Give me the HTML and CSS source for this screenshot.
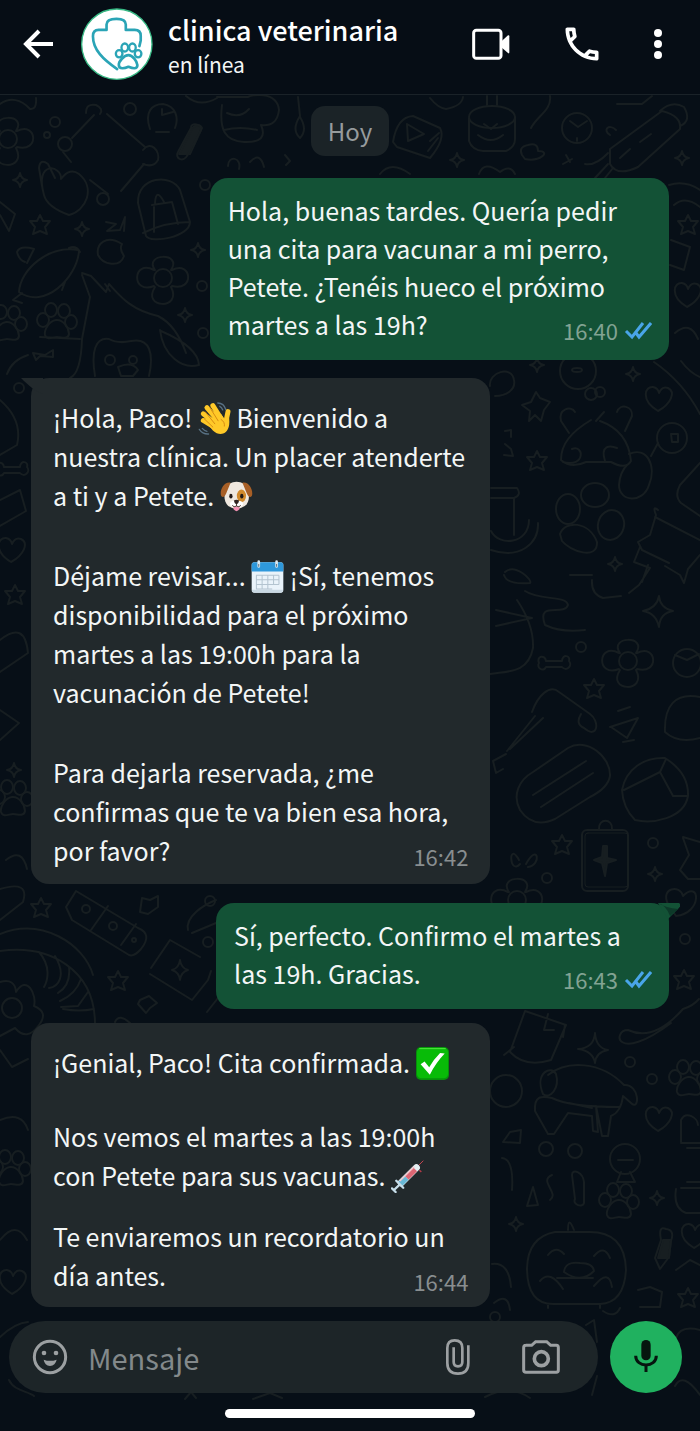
FILE: index.html
```html
<!DOCTYPE html>
<html lang="es">
<head>
<meta charset="utf-8">
<meta name="viewport" content="width=device-width, initial-scale=1">
<title>clinica veterinaria</title>
<link rel="stylesheet" href="styles.css">
</head>
<body>
<div class="screen">
  <svg class="wallpaper" viewBox="0 0 700 1431" preserveAspectRatio="xMidYMin slice" aria-hidden="true">
    <defs>
      <g id="paw"><ellipse cx="-13" cy="-3" rx="6" ry="7"/><ellipse cx="-5" cy="-13" rx="6" ry="7"/><ellipse cx="8" cy="-12" rx="6" ry="7"/><ellipse cx="15" cy="-1" rx="6" ry="7"/><path d="M0-3C-7-2-12 7-11 12C-9 18-3 14 1 14C6 14 12 17 13 11C13 5 7-4 0-3Z"/></g>
      <path id="star" d="M0-10L3-4L10-4L5 2L7 9L0 6L-7 9L-5 2L-10-4L-3-4Z"/>
      <path id="spark" d="M0-7Q1-1 7 0Q1 1 0 7Q-1 1-7 0Q-1-1 0-7Z"/>
      <path id="heart" d="M0 12C-18 1-13-13-5-12Q0-11 1-6Q4-13 10-11C18-7 13 5 0 12Z"/>
      <path id="bone" d="M-8-3H8C8-10 17-9 15-3C19 2 12 8 8 3H-8C-11 9-18 3-15-1C-18-8-9-10-8-3Z"/>
      <g id="flower"><circle r="9"/><path d="M-8-8C-20-25 20-26 8-8M9-8C29-18 32 14 9 8M8 9C20 32-22 31-8 9M-9 8C-32 17-31-19-9-8"/></g>
      <circle id="dot" r="5"/>
    </defs>
    <g class="doodle">
      <path d="M0 104C10 97 21 99 30 109Q37 110 36 98"/>
      <use href="#flower" x="8" y="139"/>
      <circle cx="55" cy="122" r="5"/><circle cx="47" cy="135" r="3"/>
      <path d="M94 115L72 138M107 114L145 147M144 164L121 191M63 152L71 162M90 180L108 194"/>
      <path d="M86 113Q86 103 96 105Q104 109 100 114"/><circle cx="65" cy="144" r="7"/><path d="M143 150C151 140 160 151 158 160C154 167 148 166 143 164"/>
      <circle cx="103" cy="199" r="6"/><circle cx="130" cy="109" r="6"/>
      <path d="M150 129C144 112 152 104 163 104C176 106 179 118 175 128M156 132H169M162 109V115L173 112"/>
      <path class="fill" d="M192 128Q199 122 202 128L190 154H179Z"/><path d="M191 128C190 122 203 124 201 130L189 152C184 165 174 158 178 152Z"/>
      <use href="#spark" x="20" y="180"/><path d="M44 195C34 160 62 165 61 179Q70 167 79 174C96 188 86 211 69 215Q47 207 44 195M42 186L39 168Q40 158 48 164L55 178"/>
      <path d="M146 236L138 203C137 176 172 173 180 190L190 222C190 237 151 244 146 236M152 205L172 202L178 224M154 207V232M155 203Q156 187 164 202M143 233Q165 222 190 222"/>
      <use href="#star" x="40" y="225"/><use href="#spark" x="82" y="229"/><path d="M106 222L116 224L107 231L120 230L125 217L124 231"/>
      <path d="M0 202L15 214L9 231L0 215"/><path d="M122 244C106 234 96 244 98 255C103 265 120 268 124 256Q119 249 122 244"/>
      <path d="M78 250C48 245 20 270 19 292C44 310 77 278 79 251ZM27 263L34 249Q20 245 17 252Q19 260 25 262M69 248Q76 245 80 252M22 293L13 300L22 303M62 290L65 282"/>
      <use href="#flower" x="163" y="278"/><use href="#paw" x="56" y="323"/><use href="#paw" x="6" y="325"/>
      <path d="M40 337L80 339M82 273L91 276L106 292L109 284C121 297 131 310 158 316Q176 325 186 353M82 275L90 297L82 339Q81 373 70 378M110 291L105 284M160 330C163 355 182 370 199 365Q198 347 161 331"/>
      <path d="M95 376C91 352 95 337 109 339Q118 344 131 341C150 337 154 354 149 376M118 367Q132 361 138 370L133 376H121Z"/><circle cx="110" cy="360" r="5"/><circle cx="133" cy="360" r="4"/>
      <use href="#spark" x="185" y="315"/><use href="#dot" x="202" y="286"/><use href="#dot" x="205" y="185"/><use href="#spark" x="198" y="250"/><use href="#dot" x="203" y="333"/>
      <path d="M33 353L45 355L53 350V357L40 356L36 360ZM7 374Q12 360 28 355"/>
      <path d="M186 96Q200 108 217 98M222 105C219 130 225 141 244 142Q269 143 261 125Q277 127 279 110C277 90 250 95 248 97H217M227 113Q240 119 249 109M224 130Q240 126 257 130"/>
      <path d="M298 97L300 116Q291 130 300 138Q308 130 300 117M250 162Q260 151 264 167M228 166C228 155 242 157 239 169M285 155L290 161L286 165"/>
      <path d="M393 142Q397 117 413 116L440 128Q446 139 430 158L397 147ZM408 141L407 124L424 134ZM430 141L439 133M428 151L438 138"/>
      <ellipse cx="492" cy="117" rx="23" ry="11"/><path d="M469 118V141Q472 150 483 151H506Q515 147 515 139V117M478 135Q491 145 503 135M484 124L491 129L497 124M487 105V96M497 105V96M430 98Q438 108 446 109Q462 106 463 97M550 96C552 110 537 116 531 128"/>
      <circle cx="577" cy="128" r="15"/><path d="M570 121L578 127L587 121M577 138V141"/>
      <path d="M610 149L662 111Q682 116 680 129L638 167Q617 177 610 164ZM660 111Q672 100 684 107Q692 121 680 126M620 158L630 149M640 142L651 134M608 153Q596 166 585 164M608 164L595 178M613 168L605 178M617 104H642L652 96"/>
      <use href="#spark" x="457" y="160"/><path d="M522 155Q518 147 528 145Q538 142 538 151C552 151 540 162 525 159ZM563 164L572 159M566 155L570 162M610 135C602 130 609 123 616 130"/>
      <use href="#spark" x="682" y="158"/><path d="M380 174Q391 160 410 174M479 174Q484 160 500 172Q510 164 515 174"/>
      <path d="M669 185Q685 180 700 190M674 205Q685 195 700 207M671 240L690 247L684 270L670 265M675 333Q690 320 698 339M654 362Q683 382 700 414M681 361Q690 373 700 377"/><use href="#star" x="688" y="225"/><use href="#heart" x="687" y="295"/>
      <path d="M490 386C488 372 512 365 514 380C516 390 506 396 495 396"/><use href="#spark" x="537" y="365"/><circle cx="578" cy="371" r="18"/><ellipse cx="577" cy="370" rx="5" ry="2"/><circle cx="591" cy="394" r="6"/><circle cx="600" cy="392" r="5"/><use href="#spark" x="633" y="374"/><use href="#heart" x="658" y="399"/>
      <path d="M536 392L540 398L550 402L544 410L541 421L535 415L529 421L530 411L522 405L531 402Z"/><use href="#star" x="537" y="461"/>
      <path d="M569 433L561 421C558 409 571 405 575 412M617 412C620 403 633 406 632 416L625 431M591 420C571 432 561 444 561 460Q571 469 586 462H611Q626 470 631 461C629 440 617 427 600 421M563 462C586 468 584 444 572 449M605 461C600 445 610 445 617 448M596 421L604 412"/>
      <circle cx="672" cy="438" r="15"/><path d="M671 434H678V442H672ZM651 456L658 443M629 454C647 446 657 466 649 485C643 504 619 502 619 485Q620 472 627 465"/>
      <ellipse cx="595" cy="495" rx="14" ry="12"/><ellipse cx="568" cy="509" rx="12" ry="15"/><ellipse cx="611" cy="525" rx="13" ry="15" transform="rotate(15 611 525)"/><path d="M560 534C565 520 589 521 597 542C598 561 570 551 562 541Z"/>
      <path d="M491 488H517Q522 495 514 498H491M514 499V535M491 531C499 547 529 544 529 520M491 550C520 560 539 543 538 523M505 431L511 430V437M505 444L511 449L513 456L504 455"/>
      <path d="M700 463L680 485Q674 496 681 503L700 516M655 517L700 540M658 510Q652 505 656 515L650 535L638 542L642 550L669 563M640 547L634 562L650 568L639 585L629 593M648 565L642 582M665 566L680 575L684 583L688 569L700 555"/>
      <use href="#spark" x="615" y="564"/><path d="M505 572C515 563 533 580 530 583Q507 585 504 575M525 591C540 601 566 595 568 605C564 617 536 600 545 625Q562 633 585 630M570 575H592M592 580Q591 594 603 598L621 596"/>
      <path d="M659 596Q660 608 673 611Q660 613 659 627Q656 613 643 611Q657 608 659 596M517 600Q534 625 533 648C528 674 507 671 490 674M496 610L532 618L496 626"/>
      <use href="#bone" x="554" y="664"/><use href="#dot" x="581" y="647"/><use href="#flower" x="628" y="661"/><circle cx="687" cy="663" r="14"/><path d="M675 655L687 660L699 654"/><use href="#star" x="594" y="689"/>
      <path d="M700 697C675 692 664 706 665 732Q678 744 700 738M532 712C538 695 550 684 559 692L590 714C600 721 598 740 584 728Q575 724 581 714M535 716L507 751M543 718L510 749M506 754L493 761L496 773L503 769"/>
      <path d="M520 810C512 795 519 780 533 772L568 748C587 737 611 757 610 776Q608 788 590 797L555 819Q533 829 520 810M533 795L586 761M541 807L593 773M610 727L638 718L627 738L611 727M618 711L630 707M623 742L634 740M622 790C626 769 644 757 665 758Q689 773 688 796C684 819 652 824 635 820Q623 808 622 790M624 790L660 772L673 796H688M660 772L666 759"/>
      <rect x="582" y="830" width="46" height="61" rx="5"/><rect class="inner" x="585" y="833" width="43" height="54" rx="3"/><path d="M599 829C598 818 613 818 612 829"/><path class="fill" d="M603 846H607V858L616 860L607 863L605 876L602 863L594 860L602 857Z"/>
      <use href="#star" x="562" y="845"/><path d="M519 860C508 840 509 876 520 864M526 864C538 842 542 865 528 867"/><use href="#dot" x="653" y="843"/><use href="#spark" x="655" y="874"/><path d="M683 837L700 842M683 838L689 855L680 870L688 879H700"/><use href="#dot" x="547" y="878"/><use href="#flower" x="517" y="900"/><path d="M668 904C660 888 680 884 683 896C700 879 703 913 676 916Z"/>
      <path d="M0 400Q23 420 17 445L0 455M0 500L20 490L26 511L0 526M0 640Q25 620 28 653L0 672M0 710L19 723L0 740M6 860Q22 847 27 869"/><use href="#heart" x="11" y="550"/><use href="#paw" x="12" y="800"/><use href="#star" x="15" y="595"/><use href="#spark" x="14" y="770"/><use href="#bone" x="12" y="470"/><use href="#dot" x="19" y="388"/>
      <use href="#star" x="41" y="908"/><path d="M66 907L76 891L138 928Q153 934 141 949Q134 957 129 955L72 920ZM91 930L108 906M121 945L136 924"/><circle cx="86" cy="909" r="4"/><circle cx="113" cy="926" r="4"/><circle cx="134" cy="940" r="2"/>
      <path d="M140 912L142 898L150 900L158 896V907L148 914ZM0 934C42 917 84 944 93 975M0 951C50 944 95 970 95 1024M39 952C51 966 48 980 44 987M55 956C67 976 58 987 49 988M69 967Q71 985 58 993M81 979Q76 994 60 1001M88 992L78 1006L61 1007M94 1009Q79 1012 63 1009"/>
      <circle cx="12" cy="1008" r="10"/><path d="M0 982Q15 978 16 992C27 974 37 995 34 1006Q49 1012 39 1025Q27 1042 15 1028L0 1036M0 889Q30 880 23 902L0 920"/>
      <path d="M151 968L170 940L200 957M211 971L208 980L192 1000L150 974M180 960Q181 968 188 970Q181 972 180 980Q179 972 172 970Q179 968 180 960"/><use href="#star" x="118" y="981"/><path d="M140 1000L149 996L157 1003L150 1008L146 1013L138 1004ZM188 930C185 917 203 905 216 900M192 933L216 923M207 1012L218 998"/><use href="#dot" x="210" y="901"/><use href="#dot" x="208" y="942"/><path d="M115 1022Q119 1013 130 1023M0 1050L12 1067L28 1059M0 1120Q22 1111 28 1130M0 1240Q16 1220 27 1240"/><use href="#paw" x="10" y="1170"/><use href="#heart" x="12" y="1282"/>
      <use href="#dot" x="685" y="939"/><use href="#star" x="684" y="980"/><path d="M525 1011L510 1052Q525 1068 551 1060L566 1025ZM565 1025L563 1037M514 1047L504 1055M548 1014L544 1030H554M671 1023C615 1065 612 1030 628 1030C649 1040 668 1026 683 1009Q693 1006 699 999"/>
      <path d="M595 1033Q596 1048 608 1050Q596 1052 595 1063Q593 1051 578 1049Q594 1048 595 1033"/><circle cx="506" cy="1091" r="16"/><use href="#dot" x="630" y="1062"/><use href="#dot" x="652" y="1079"/><use href="#paw" x="688" y="1080"/><use href="#heart" x="658" y="1119"/>
      <path d="M548 1075C567 1060 601 1061 624 1085C640 1084 640 1112 631 1103L623 1096Q621 1112 611 1116L608 1136H602L596 1106L598 1132L593 1131L592 1116L568 1113L554 1134H548L535 1111C534 1095 542 1096 552 1098Q570 1107 619 1107M543 1094C534 1072 552 1065 556 1074C560 1088 550 1100 543 1094M569 1103L592 1108"/>
      <path d="M503 1142L510 1132L521 1130L520 1143ZM502 1158Q514 1159 512 1190M527 1206L533 1187L538 1205ZM552 1175C538 1181 560 1193 550 1200M572 1175C572 1168 583 1172 584 1182V1203C583 1208 572 1205 575 1199ZM681 1142V1120C686 1110 698 1118 698 1125M681 1143H700M681 1188H700M676 1189Q673 1208 686 1213H700M687 1148H700M687 1182H700"/>
      <circle cx="546" cy="1149" r="7"/><circle cx="575" cy="1151" r="7"/><circle cx="625" cy="1159" r="15"/><path d="M618 1160H633M621 1172L617 1182H635L630 1172"/><use href="#paw" x="618" y="1203"/><use href="#spark" x="657" y="1198"/><use href="#spark" x="516" y="1224"/>
      <path d="M555 1232H588Q625 1231 626 1270Q624 1303 600 1304H553Q527 1304 527 1268Q528 1237 555 1232M548 1255Q556 1245 564 1254M594 1256Q604 1244 610 1258M564 1272Q565 1261 580 1263Q593 1263 594 1271Q581 1284 564 1272M568 1230Q568 1215 574 1230M540 1281Q550 1269 563 1289M594 1286Q609 1268 612 1287M557 1278H593M548 1304V1308M600 1304V1308"/>
      <path class="fill" d="M663 1240H671L669 1258H658Z"/><path d="M661 1240Q658 1225 666 1229Q675 1230 671 1241L669 1257L660 1269L655 1258ZM638 1290L650 1287L662 1292L660 1307H640M676 1270L690 1260L700 1265"/><use href="#heart" x="694" y="1236"/><use href="#star" x="688" y="1298"/><path d="M492 1264Q509 1262 511 1287M494 1303Q508 1292 510 1310"/>
      <path d="M0 1337Q15 1323 28 1322M9 1380C14 1391 28 1391 34 1396M185 1399L191 1392L196 1398M253 1399L270 1393L282 1398M485 1397Q510 1384 530 1398M586 1325L594 1320L597 1342M597 1376L592 1395M603 1311Q615 1319 620 1308M676 1338Q680 1325 700 1330M675 1386Q683 1371 700 1395"/><use href="#dot" x="495" y="1317"/>
    </g>
  </svg>

  <header class="topbar">
    <button class="icon-btn back" aria-label="Atrás"><svg width="32" height="32" viewBox="0 0 32 32"><path class="line" d="M30 16H4M16 3L3 16L16 29"/></svg></button>
    <svg class="avatar" viewBox="243 20 217 217" role="img" aria-label="Logo de la clínica">
      <circle class="avatar-disc" cx="351" cy="129" r="106"/>
      <g class="avatar-line"><path d="M352 204C310 175 279 146 279 105Q279 86 296 86H320V70Q320 53 350 53Q378 53 378 70V86H405Q423 86 423 104V118L419 135"/><ellipse cx="358" cy="158" rx="10" ry="11"/><ellipse cx="375" cy="139" rx="10" ry="12"/><ellipse cx="398" cy="139" rx="10" ry="12"/><ellipse cx="415" cy="158" rx="10" ry="11"/><path d="M386 162C373 162 356 181 357 192C358 206 375 202 386 197C398 202 413 206 413 192C412 181 398 162 386 162Z"/></g>
    </svg>
    <div class="contact"><h1 class="name">clinica veterinaria</h1><p class="status">en línea</p></div>
    <nav class="actions" aria-label="Acciones">
      <button class="icon-btn" aria-label="Videollamada"><svg width="42" height="36" viewBox="350 81 126 108"><rect class="video-frame" x="361" y="94" width="82" height="84" rx="8"/><path class="solid" d="M443 128L464 109Q468 107 468 112V160Q468 165 464 162L443 144Z"/></svg></button>
      <button class="icon-btn" aria-label="Llamar"><svg width="44" height="44" viewBox="0 0 24 24"><path class="solid" d="M6.54 5c.06.89.21 1.76.45 2.59l-1.2 1.2c-.41-1.2-.67-2.47-.76-3.79h1.51m9.86 12.02c.85.24 1.72.39 2.6.45v1.49c-1.32-.09-2.59-.35-3.8-.75l1.2-1.19M7.5 3H4c-.55 0-1 .45-1 1 0 9.39 7.61 17 17 17 .55 0 1-.45 1-1v-3.49c0-.55-.45-1-1-1-1.24 0-2.45-.2-3.57-.57-.1-.04-.21-.05-.31-.05-.26 0-.51.1-.71.29l-2.2 2.2c-2.83-1.45-5.15-3.76-6.59-6.59l2.2-2.2c.28-.28.36-.67.25-1.02C8.7 6.45 8.5 5.25 8.5 4c0-.55-.45-1-1-1z"/></svg></button>
      <button class="icon-btn more" aria-label="Más opciones"><svg width="12" height="32" viewBox="0 0 12 32"><g class="solid"><circle cx="6" cy="5" r="4"/><circle cx="6" cy="16" r="4"/><circle cx="6" cy="27" r="4"/></g></svg></button>
    </nav>
  </header>

  <main class="chat">
    <time class="day">Hoy</time>

    <article class="bubble sent">
      <p>Hola, buenas tardes. Quería pedir<br>una cita para vacunar a mi perro,<br>Petete. ¿Tenéis hueco el próximo<br>martes a las 19h?
        <span class="meta">16:40<svg class="ticks" viewBox="0 0 28 20" role="img" aria-label="Leído"><path d="M2 11L8 17L19 3M12 13L15 17L27 3"/></svg></span></p>
    </article>

    <article class="bubble received first">
      <svg class="tail" viewBox="0 0 22 16" aria-hidden="true"><path d="M0 0H22V16C15 14 8 8 0 0Z"/></svg>
      <p>¡Hola, Paco!
        <svg class="emoji" viewBox="0 0 96 100" role="img" aria-label="Mano saludando"><path class="wave-move" d="M58 3Q76 3 83 24M64 13Q70 16 73 24M2 83Q12 98 30 97M11 80Q17 87 25 89"/><g class="wave-finger"><path d="M60 84L14 56M60 72L14 36M66 65L25 17M74 60L43 11M80 72L89 29"/></g><path class="wave-palm" d="M34 57L68 36L82 57L91 42Q95 60 91 76C84 100 61 103 43 86L28 68Z"/><path class="wave-gap" d="M43 76L17 51M49 66L20 30M59 57L34 17M68 53Q80 60 78 73"/></svg>
        Bienvenido a<br>nuestra clínica. Un placer atenderte<br>a ti y a Petete.
        <svg class="emoji" viewBox="0 0 100 96" role="img" aria-label="Cara de perro"><path fill="#f0e8df" d="M28 9Q50-3 73 9C94 30 91 66 75 77Q50 94 25 77C8 60 10 28 28 9Z"/><path fill="#a85f26" d="M32 6C11 2-1 30 3 45Q10 57 19 38ZM68 6C89 2 101 30 97 45Q90 57 81 38Z"/><ellipse cx="65" cy="46" rx="14" ry="19" fill="#d18a2d"/><ellipse cx="33" cy="47" rx="5" ry="7" fill="#241a16"/><ellipse cx="66" cy="47" rx="5" ry="7" fill="#241a16"/><path fill="#f391b3" d="M41 78H59V87Q50 98 41 87Z"/><path fill="#fff" d="M30 70Q32 59 50 61Q68 59 70 70Q68 83 50 78Q32 83 30 70Z"/><path fill="#302321" d="M42 60Q50 56 58 60Q57 69 50 72Q43 69 42 60Z"/><path fill="none" stroke="#4b3630" stroke-width="3" d="M50 71V77Q42 82 37 75M50 77Q58 82 63 75"/></svg></p>
      <p class="gap-lg">Déjame revisar...
        <svg class="emoji" viewBox="0 0 96 98" role="img" aria-label="Calendario"><rect x="1" y="7" width="94" height="90" rx="8" fill="#eaf3fa"/><path fill="#2e98db" d="M1 34V15Q1 7 9 7H87Q95 7 95 15V34Z"/><path fill="#c9d8e3" d="M2 88H94Q94 97 87 97H9Q2 97 2 88Z"/><path stroke="#b4c4d0" stroke-width="3" fill="none" d="M14 45H82M14 59H82M14 73H82M14 86H62M15 45V86M32 45V86M49 45V86M66 45V73M82 45V73"/><path stroke="#dce8ef" stroke-width="8" stroke-linecap="round" d="M22 5V19M75 5V19"/><path stroke="#61727d" stroke-width="3" d="M22 12V20M75 12V20"/></svg>
        ¡Sí, tenemos<br>disponibilidad para el próximo<br>martes a las 19:00h para la<br>vacunación de Petete!</p>
      <p class="gap-lg">Para dejarla reservada, ¿me<br>confirmas que te va bien esa hora,<br>por favor?
        <span class="meta">16:42</span></p>
    </article>

    <article class="bubble sent second">
      <svg class="tail" viewBox="0 0 22 16" aria-hidden="true"><path d="M0 0H21Q24 2 20 6L10 16Z"/><path class="tail-shade" d="M0 0Q8 2 12 13L20 6Q8 5 0 0Z"/></svg>
      <p>Sí, perfecto. Confirmo el martes a<br>las 19h. Gracias.
        <span class="meta">16:43<svg class="ticks" viewBox="0 0 28 20" role="img" aria-label="Leído"><path d="M2 11L8 17L19 3M12 13L15 17L27 3"/></svg></span></p>
    </article>

    <article class="bubble received last">
      <p>¡Genial, Paco! Cita confirmada.
        <svg class="emoji" viewBox="0 0 100 100" role="img" aria-label="Confirmado"><rect width="100" height="100" rx="15" fill="#07910b"/><rect x="3" y="2" width="94" height="93" rx="13" fill="#08bb08"/><path fill="none" stroke="#55e742" stroke-width="3" d="M10 5H90"/><path fill="#fff" d="M14 52L26 44L40 61Q53 38 73 18L87 20Q60 48 42 84Z"/></svg></p>
      <p class="gap-md">Nos vemos el martes a las 19:00h<br>con Petete para sus vacunas.
        <svg class="emoji" viewBox="0 0 100 100" role="img" aria-label="Jeringuilla"><path stroke="#c64652" stroke-width="3" d="M76 24L98 2"/><path stroke="#e5eef2" stroke-width="21" stroke-linecap="round" d="M77 23L31 69"/><path stroke="#dc6673" stroke-width="17" d="M73 28L47 54"/><path stroke="#68b8d6" stroke-width="17" d="M47 54L28 73"/><path stroke="#f4c5cb" stroke-width="4" d="M71 20L27 64"/><path stroke="#c7deea" stroke-width="7" stroke-linecap="round" d="M16 63L37 84M27 74L9 91M3 86L14 97"/><path stroke="#ba3b49" stroke-width="4" d="M86 31L92 36"/></svg></p>
      <p class="gap-sm">Te enviaremos un recordatorio un<br>día antes.
        <span class="meta">16:44</span></p>
    </article>
  </main>

  <footer class="footer">
    <form class="composer">
      <div class="field">
        <button type="button" class="icon-btn" aria-label="Emojis"><svg width="36" height="36" viewBox="95 118 108 108"><circle class="smile-ring" cx="149" cy="172" r="47"/><g class="muted"><circle cx="131" cy="160" r="7"/><circle cx="167" cy="160" r="7"/><path d="M130 180Q149 187 169 180Q165 198 149 199Q133 198 130 180Z"/></g></svg></button>
        <input class="message" type="text" placeholder="Mensaje" aria-label="Mensaje">
        <button type="button" class="icon-btn" aria-label="Adjuntar"><svg width="26" height="38" viewBox="284 114 78 114"><path class="clip" d="M354 136V189Q354 221 323 221Q291 221 291 189V144Q291 121 313 121Q336 121 336 144V186Q336 199 323 199Q310 199 310 186V142"/></svg></button>
        <button type="button" class="icon-btn camera" aria-label="Cámara"><svg width="38" height="34" viewBox="514 122 114 102"><g class="cam"><path d="M525 138H543L555 127H588L600 138H617Q623 138 623 145V212Q623 219 617 219H526Q519 219 519 212V145Q519 138 526 138Z"/><circle cx="572" cy="178" r="21"/></g></svg></button>
      </div>
      <button type="button" class="mic" aria-label="Grabar audio"><svg width="26" height="36" viewBox="847 120 78 108"><rect x="872" y="123" width="28" height="61" rx="14"/><path class="mic-stand" d="M855 170C855 207 917 207 917 170M886 200V219"/></svg></button>
    </form>
    <div class="home-bar"></div>
  </footer>
</div>
</body>
</html>
```
FILE: styles.css
```css
* { box-sizing: border-box; }

body {
  margin: 0;
  background: #070f17;
  color: #f3f6f6;
  font-family: "Noto Sans CJK SC", "Noto Sans", sans-serif;
  font-size: 25px;
}

h1, p { margin: 0; }

button {
  border: 0;
  padding: 0;
  background: none;
  color: inherit;
}

.screen {
  position: relative;
  display: flex;
  flex-direction: column;
  min-height: 100vh;
  overflow: hidden;
}

.wallpaper {
  position: absolute;
  inset: 0;
  width: 100%;
  height: 100%;
}

.doodle {
  fill: none;
  stroke: #171e21;
  stroke-width: 2;
  stroke-linecap: round;
  stroke-linejoin: round;
}
.doodle .fill { fill: #171e21; }
.doodle .inner { stroke-width: 1; }

.topbar {
  position: relative;
  display: flex;
  align-items: center;
  height: 95px;
  padding: 0 36px 6px 23px;
  background: #060d15;
  border-bottom: 1px solid #1a2228;
}

.icon-btn {
  display: flex;
  align-items: center;
  justify-content: center;
  flex: none;
}
.solid { fill: #fff; }
.line { fill: none; stroke: #fff; stroke-width: 4; }

.avatar {
  flex: none;
  width: 72px;
  height: 72px;
  margin-left: 26px;
}
.avatar-disc { fill: #fff; stroke: #38b985; stroke-width: 4; }
.avatar-line { fill: none; stroke: #2aa4b6; stroke-width: 8; stroke-linejoin: round; stroke-linecap: round; }
.avatar-line ellipse { fill: #fff; stroke-width: 7; }

.contact { flex: 1; margin-left: 15px; padding-top: 4px; }
.name { font-size: 27px; line-height: 36px; font-weight: 500; white-space: nowrap; color: #fff; }
.status { font-size: 21px; line-height: 32px; }

.actions { display: flex; align-items: center; gap: 48px; }
.actions .more { width: 12px; }
.video-frame { fill: none; stroke: #fff; stroke-width: 9; }

.chat {
  position: relative;
  flex: 1;
  display: flex;
  flex-direction: column;
  padding: 11px 31px 12px;
}

.day {
  align-self: center;
  padding: 0 17px;
  border-radius: 14px;
  background: #1b2327;
  color: #969b9d;
  font-size: 24px;
  line-height: 50px;
}

.bubble {
  position: relative;
  border-radius: 18px;
  white-space: nowrap;
}
.received {
  align-self: flex-start;
  width: 72%;
  padding: 20px 22px 14px;
  background: #22292c;
  line-height: 39px;
}
.sent {
  align-self: flex-end;
  width: 72%;
  margin-top: 22px;
  padding: 13px 17px 17px 18px;
  background: #135236;
  line-height: 38px;
}
.first { margin-top: 18px; }
.second { width: 71%; margin-top: 19px; }
.last { margin-top: 14px; padding-bottom: 12px; }

.gap-lg { margin-top: 41px; }
.gap-md { margin-top: 35px; }
.gap-sm { margin-top: 22px; }

.tail { position: absolute; top: 0; width: 22px; height: 16px; }
.first .tail { left: -10px; fill: #22292c; }
.second .tail { right: -11px; fill: #135236; }
.second .tail-shade { fill: #0d3929; }

.meta {
  float: right;
  display: flex;
  align-items: center;
  gap: 6px;
  margin-top: 12px;
  font-size: 22px;
  line-height: 26px;
  color: #898e90;
}
.sent .meta { color: #82a393; }
.ticks {
  width: 28px;
  height: 20px;
  fill: none;
  stroke: #49a5e8;
  stroke-width: 3;
}

.emoji { width: 33px; height: 33px; vertical-align: -7px; }
.wave-finger { fill: none; stroke: #ffc928; stroke-width: 15; stroke-linecap: round; }
.wave-palm { fill: #ffc928; }
.wave-gap { fill: none; stroke: #d78b12; stroke-width: 3; stroke-linecap: round; }
.wave-move { fill: none; stroke: #587184; stroke-width: 4; stroke-linecap: round; }

.footer { position: relative; padding-bottom: 13px; }
.composer { display: flex; gap: 12px; padding: 0 18px 0 9px; }
.field {
  flex: 1;
  min-width: 0;
  display: flex;
  align-items: center;
  height: 72px;
  padding: 0 38px 0 23px;
  border-radius: 36px;
  background: #1d2528;
}
.message {
  flex: 1;
  min-width: 0;
  margin: 0 18px 0 20px;
  padding: 0;
  border: 0;
  outline: 0;
  background: none;
  color: #f3f6f6;
  font-family: inherit;
  font-size: 29px;
  line-height: 42px;
}
.message::placeholder { color: #83898b; opacity: 1; }
.camera { margin-left: 51px; }
.muted { fill: #9ca0a2; }
.smile-ring, .clip, .cam { fill: none; stroke: #9ca0a2; stroke-width: 9; }
.clip { stroke-width: 8; }
.cam circle { stroke-width: 11; }

.mic {
  display: flex;
  align-items: center;
  justify-content: center;
  flex: none;
  width: 72px;
  height: 72px;
  border-radius: 50%;
  background: #20b15f;
}
.mic rect { fill: #06150f; }
.mic-stand { fill: none; stroke: #06150f; stroke-width: 9; }

.home-bar {
  width: 250px;
  height: 9px;
  margin: 16px auto 0;
  border-radius: 5px;
  background: #fff;
}
```
